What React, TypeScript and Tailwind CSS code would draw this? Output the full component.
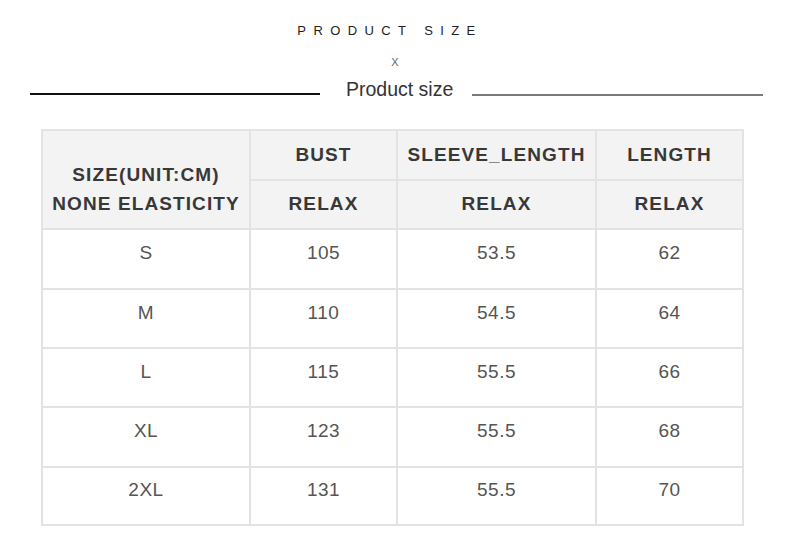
import React from "react";

const rows = [
  ["S", "105", "53.5", "62"],
  ["M", "110", "54.5", "64"],
  ["L", "115", "55.5", "66"],
  ["XL", "123", "55.5", "68"],
  ["2XL", "131", "55.5", "70"],
];

export default function App() {
  const hdr =
    "bg-[#f3f3f3] flex items-center justify-center text-[19px] font-bold tracking-[1.1px] text-[#383838]";
  const cell =
    "bg-white flex items-center justify-center pb-[11px] text-[19px] text-[#555] tracking-[0.5px]";
  return (
    <div
      className="w-[790px] h-[558px] bg-white relative"
      style={{ fontFamily: '"Liberation Sans", Arial, sans-serif' }}
    >
      <div className="pt-[23px] flex flex-col items-center">
        <div className="h-[16px] leading-[16px] text-[13px] tracking-[7.4px] text-[#222] pr-[10px]">
          PRODUCT SIZE
        </div>
        <div className="mt-[16px] h-[14px] leading-[14px] text-[11px] text-[#666]">X</div>
      </div>
      <div className="mt-[8px] flex items-center h-[24px] pl-[30px]">
        <div className="w-[290px] h-[1.5px] bg-[#111] mt-[10px]" />
        <div className="ml-[26px] text-[19.5px] leading-[24px] text-[#333]">Product size</div>
        <div className="ml-[19px] w-[291px] h-[2px] bg-[#7a7a7a] mt-[11px]" />
      </div>
      <div className="ml-[41px] mt-[28px] w-[703px] p-[2px] bg-[#e3e3e3] grid grid-cols-[206px_145px_197px_145px] grid-rows-[48px_47px_58px_57px_57px_58px_56px] gap-[2px]">
        <div className={hdr + " row-span-2 flex-col pt-[18px] leading-[29px]"}>
          <div>SIZE(UNIT:CM)</div>
          <div>NONE ELASTICITY</div>
        </div>
        <div className={hdr}>BUST</div>
        <div className={hdr}>SLEEVE_LENGTH</div>
        <div className={hdr}>LENGTH</div>
        <div className={hdr}>RELAX</div>
        <div className={hdr}>RELAX</div>
        <div className={hdr}>RELAX</div>
        {rows.map((r, i) =>
          r.map((v, j) => (
            <div key={i + "-" + j} className={cell}>
              {v}
            </div>
          ))
        )}
      </div>
    </div>
  );
}
